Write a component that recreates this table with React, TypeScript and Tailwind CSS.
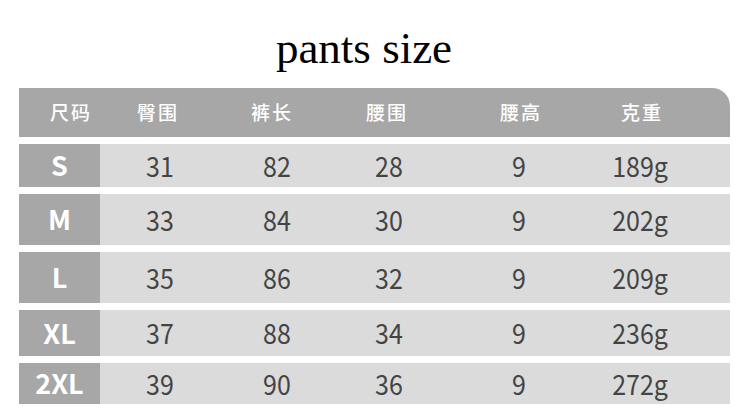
const rows = [
  { size: "S", h: "h-[43px]", v: ["31", "82", "28", "9", "189g"] },
  { size: "M", h: "h-[51px]", v: ["33", "84", "30", "9", "202g"] },
  { size: "L", h: "h-[51px]", v: ["35", "86", "32", "9", "209g"] },
  { size: "XL", h: "h-[46px]", v: ["37", "88", "34", "9", "236g"] },
  { size: "2XL", h: "h-[41px]", v: ["39", "90", "36", "9", "272g"] },
];

const headers = ["臀围", "裤长", "腰围", "腰高", "克重"];

const grid = "grid grid-cols-[81px_120px_114px_110px_150px_92px_1fr]";

export default function App() {
  return (
    <div className="w-[750px] h-[410px] bg-white overflow-hidden">
      {/* TITLE */}
      <div className="h-[88px] pt-[22px] pr-[22px] text-center">
        <h1 className="text-[45px] leading-[52px] text-black font-['Liberation_Serif',serif]">
          pants size
        </h1>
      </div>

      {/* TABLE */}
      <div className="mx-[19px] w-[711px] flex flex-col gap-[7px] font-['Noto_Sans_CJK_SC','Noto_Sans',sans-serif]">
        <div className={`${grid} h-[49px] items-center bg-[#a7a7a7] rounded-tr-[18px] text-white text-[19px] font-medium`}>
          <div className="pl-[31px] tracking-[2px]">尺码</div>
          {headers.map((t, i) => (
            <div key={t} className={i === 0 ? "text-center pr-[4px] tracking-[2px]" : i === 1 ? "text-center pr-[10px] tracking-[2px]" : i === 2 ? "text-center pr-[4px] tracking-[2px]" : "text-center pl-[4px] tracking-[2px]"}>
              {t}
            </div>
          ))}
          <div />
        </div>

        {rows.map((r) => (
          <div key={r.size} className={`${grid} ${r.h} items-center bg-[#dbdbdb]`}>
            <div className="h-full flex items-center justify-center bg-[#a7a7a7] text-white text-[27px] font-bold">
              {r.size}
            </div>
            {r.v.map((x, i) => (
              <div key={i} className="text-center text-[25px] text-[#444444] scale-y-[1.1]">
                {x}
              </div>
            ))}
            <div />
          </div>
        ))}
      </div>
    </div>
  );
}
